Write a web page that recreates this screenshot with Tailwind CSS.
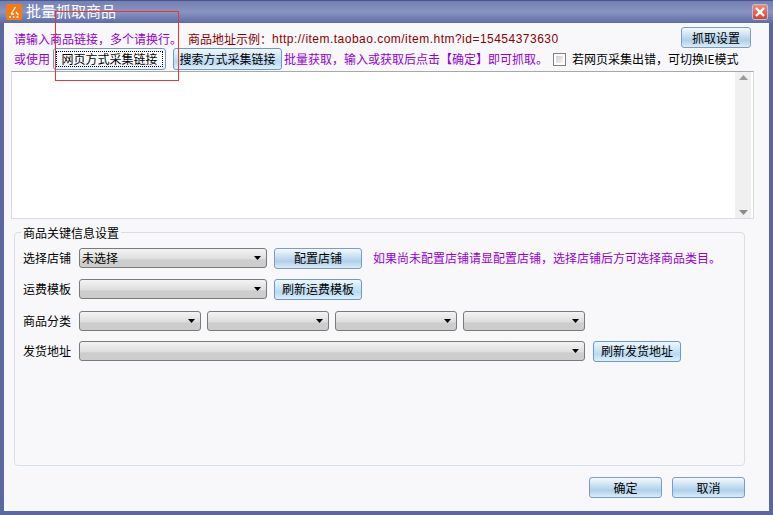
<!DOCTYPE html>
<html lang="zh-CN">
<head>
  <meta charset="UTF-8">
  <title>批量抓取商品</title>
  <script src="https://cdn.jsdelivr.net/npm/@tailwindcss/browser@4"></script>
</head>
<body class="w-[773px] h-[515px] overflow-hidden bg-[#5b67a3] font-['Noto_Sans_CJK_SC','Liberation_Sans',sans-serif] text-[12px] leading-[16px] text-black">
  <div class="relative w-[773px] h-[515px] flex flex-col border-t border-[#4a5590]">
    <!-- title bar -->
    <div class="h-[22px] shrink-0 flex items-center pl-[6px] pr-[5px] bg-gradient-to-b from-[#7480b4] via-[#8a94c0] to-[#5f6ba6]">
      <svg class="w-[16px] h-[16px] shrink-0" viewBox="0 0 16 16">
        <rect width="16" height="16" rx="2" fill="#f47a12"/>
        <path d="M9.5 3 L5 10 M5 10 H8 M3 13 H5 M7 13 H8.5 M10.5 13 H12.5 M10 8 L12.5 11" stroke="#fff" stroke-width="1.3" fill="none"/>
      </svg>
      <span class="ml-[5px] -mt-[2px] -translate-x-[1px] text-[15px] leading-[20px] text-white">批量抓取商品</span>
      <div class="ml-auto w-[16px] h-[16px] rounded-[2px] border border-[#b8c0dc] bg-gradient-to-b from-[#f08a78] to-[#d8402e] flex items-center justify-center">
        <svg class="w-[10px] h-[10px]" viewBox="0 0 10 10"><path d="M1 1 L9 9 M9 1 L1 9" stroke="#fff" stroke-width="2.4"/></svg>
      </div>
    </div>

    <!-- client area -->
    <div class="mx-[4px] h-[488px] bg-[#f8f8fb] flex flex-col">
      <div class="h-[25px] flex items-end pl-[10px] pr-[18px]">
        <span class="text-[#9400d3] w-[174px] pb-[1px]">请输入商品链接，多个请换行。</span>
        <span class="text-[#8b0000] pb-[1px]">商品地址示例：</span>
        <span class="text-[#8b0000] pb-[1px] font-['Liberation_Sans',sans-serif] tracking-[0.48px]">http://item.taobao.com/item.htm?id=15454373630</span>
        <div class="ml-auto w-[70px] h-[21px] rounded-[3px] border border-[#7d9cc4] bg-gradient-to-b from-[#f4f9fd] via-[#aed0ea] via-65% to-[#dcecf8] flex items-center justify-center">抓取设置</div>
      </div>
      <div class="h-[22px] flex items-center pl-[10px]">
        <span class="text-[#9400d3] w-[39px]">或使用</span>
        <div class="w-[113px] h-[22px] rounded-[3px] border border-[#6c9ac4] bg-gradient-to-b from-[#fafdff] via-[#ffffff] to-[#e4f0f9] p-[2px]">
          <div class="h-full border border-dotted border-black flex items-center justify-center">网页方式采集链接</div>
        </div>
        <div class="ml-[7px] w-[109px] h-[22px] rounded-[3px] border border-[#6c9ac4] bg-gradient-to-b from-[#f0f7fc] via-[#b8daf2] via-65% to-[#e0eff9] flex items-center justify-center">搜索方式采集链接</div>
        <span class="ml-[2px] w-[269px] text-[#9400d3] whitespace-nowrap">批量获取，输入或获取后点击【确定】即可抓取。</span>
        <div class="w-[13px] h-[13px] border border-[#808080] bg-white p-[2px]"><div class="h-full bg-gradient-to-br from-[#d0d0d0] to-[#f4f4f4]"></div></div>
        <span class="ml-[6px] whitespace-nowrap">若网页采集出错，可切换IE模式</span>
      </div>

      <!-- link textarea -->
      <div class="mt-[1px] ml-[7px] w-[743px] h-[148px] bg-white border border-[#d4dce6] border-t-[#a8a8a8] flex justify-end pr-[2px]">
        <div class="w-[16px] h-full bg-[#f0f0f0] flex flex-col items-center justify-between py-[3px]">
          <svg class="w-[9px] h-[5px]" viewBox="0 0 9 5"><path d="M4.5 0 L9 5 H0 Z" fill="#9a9a9a"/></svg>
          <svg class="w-[9px] h-[5px]" viewBox="0 0 9 5"><path d="M0 0 H9 L4.5 5 Z" fill="#8a8a8a"/></svg>
        </div>
      </div>

      <!-- key info group -->
      <div class="relative mt-[13px] ml-[10px] w-[731px] h-[234px] rounded-[4px] border border-[#d6dfe8] flex flex-col pl-[8px] pt-[14px]">
        <span class="absolute left-[6px] top-[-8px] px-[2px] bg-[#f8f8fb]">商品关键信息设置</span>
        <div class="flex items-center h-[22px]">
          <span class="w-[56px]">选择店铺</span>
          <div class="w-[188px] h-[20px] rounded-[3px] border border-[#7a7a7a] bg-[linear-gradient(#f3f3f3,#dedede_55%,#cdcdcd_60%,#cdcdcd)] flex items-center px-[2px]">
            <span>未选择</span>
            <svg class="ml-auto mr-[3px] w-[7px] h-[4px]" viewBox="0 0 7 4"><path d="M0 0 H7 L3.5 4 Z" fill="#000"/></svg>
          </div>
          <div class="ml-[7px] w-[88px] h-[21px] rounded-[3px] border border-[#7d9cc4] bg-gradient-to-b from-[#f4f9fd] via-[#aed0ea] via-65% to-[#dcecf8] flex items-center justify-center">配置店铺</div>
          <span class="ml-[11px] text-[#9400d3] whitespace-nowrap">如果尚未配置店铺请显配置店铺，选择店铺后方可选择商品类目。</span>
        </div>
        <div class="mt-[9px] flex items-center h-[22px]">
          <span class="w-[56px]">运费模板</span>
          <div class="w-[188px] h-[20px] rounded-[3px] border border-[#7a7a7a] bg-[linear-gradient(#f3f3f3,#dedede_55%,#cdcdcd_60%,#cdcdcd)] flex items-center px-[2px]">
            <svg class="ml-auto mr-[3px] w-[7px] h-[4px]" viewBox="0 0 7 4"><path d="M0 0 H7 L3.5 4 Z" fill="#000"/></svg>
          </div>
          <div class="ml-[7px] w-[88px] h-[21px] rounded-[3px] border border-[#6c9ac4] bg-gradient-to-b from-[#f0f7fc] via-[#b8daf2] via-65% to-[#e0eff9] flex items-center justify-center">刷新运费模板</div>
        </div>
        <div class="mt-[11px] flex items-center h-[20px]">
          <span class="w-[56px]">商品分类</span>
          <div class="flex gap-[6px]">
            <div class="w-[122px] h-[20px] rounded-[3px] border border-[#7a7a7a] bg-[linear-gradient(#f3f3f3,#dedede_55%,#cdcdcd_60%,#cdcdcd)] flex items-center px-[2px]">
              <svg class="ml-auto mr-[3px] w-[7px] h-[4px]" viewBox="0 0 7 4"><path d="M0 0 H7 L3.5 4 Z" fill="#000"/></svg>
            </div>
            <div class="w-[122px] h-[20px] rounded-[3px] border border-[#7a7a7a] bg-[linear-gradient(#f3f3f3,#dedede_55%,#cdcdcd_60%,#cdcdcd)] flex items-center px-[2px]">
              <svg class="ml-auto mr-[3px] w-[7px] h-[4px]" viewBox="0 0 7 4"><path d="M0 0 H7 L3.5 4 Z" fill="#000"/></svg>
            </div>
            <div class="w-[122px] h-[20px] rounded-[3px] border border-[#7a7a7a] bg-[linear-gradient(#f3f3f3,#dedede_55%,#cdcdcd_60%,#cdcdcd)] flex items-center px-[2px]">
              <svg class="ml-auto mr-[3px] w-[7px] h-[4px]" viewBox="0 0 7 4"><path d="M0 0 H7 L3.5 4 Z" fill="#000"/></svg>
            </div>
            <div class="w-[122px] h-[20px] rounded-[3px] border border-[#7a7a7a] bg-[linear-gradient(#f3f3f3,#dedede_55%,#cdcdcd_60%,#cdcdcd)] flex items-center px-[2px]">
              <svg class="ml-auto mr-[3px] w-[7px] h-[4px]" viewBox="0 0 7 4"><path d="M0 0 H7 L3.5 4 Z" fill="#000"/></svg>
            </div>
          </div>
        </div>
        <div class="mt-[9px] flex items-center h-[22px]">
          <span class="w-[56px]">发货地址</span>
          <div class="w-[506px] h-[20px] rounded-[3px] border border-[#7a7a7a] bg-[linear-gradient(#f3f3f3,#dedede_55%,#cdcdcd_60%,#cdcdcd)] flex items-center px-[2px]">
            <svg class="ml-auto mr-[3px] w-[7px] h-[4px]" viewBox="0 0 7 4"><path d="M0 0 H7 L3.5 4 Z" fill="#000"/></svg>
          </div>
          <div class="ml-[8px] w-[88px] h-[21px] rounded-[3px] border border-[#6c9ac4] bg-gradient-to-b from-[#f0f7fc] via-[#b8daf2] via-65% to-[#e0eff9] flex items-center justify-center">刷新发货地址</div>
        </div>
      </div>

      <!-- footer buttons -->
      <div class="mt-[11px] flex justify-end gap-[10px] pr-[24px]">
        <div class="w-[73px] h-[21px] rounded-[3px] border border-[#7d9cc4] bg-gradient-to-b from-[#f4f9fd] via-[#aed0ea] via-65% to-[#dcecf8] flex items-center justify-center">确定</div>
        <div class="w-[73px] h-[21px] rounded-[3px] border border-[#7d9cc4] bg-gradient-to-b from-[#f4f9fd] via-[#aed0ea] via-65% to-[#dcecf8] flex items-center justify-center">取消</div>
      </div>
    </div>

    <!-- red annotation box drawn over the screenshot -->
    <div class="absolute left-[55px] top-[10px] w-[124px] h-[70px] border border-[#ee3333]"></div>
  </div>
</body>
</html>
